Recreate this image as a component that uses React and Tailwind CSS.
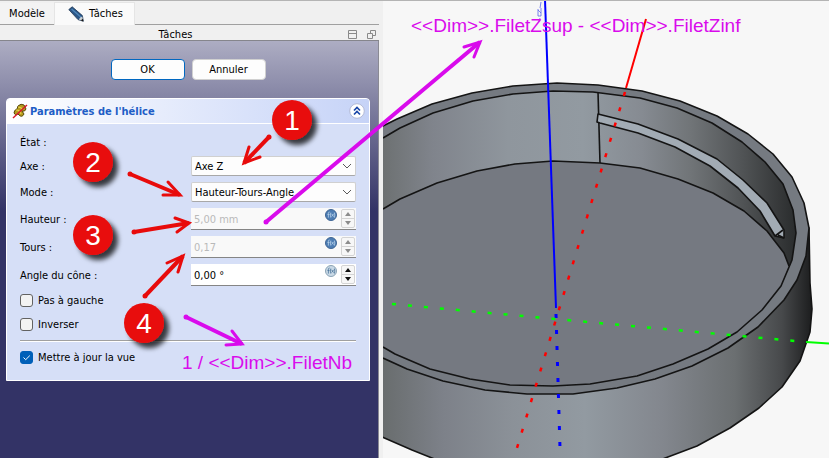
import { useState } from "react";
import clsx from "clsx";

const OUTER_RIM =
    "383,126 397,119 432,104 472,93 513,86 557,83 598,85 642,91 680,101 717,116 748,134 773,154 792,177 804,203 809,228 806,256 797,280 784,300 758,327 728,348 692,366 655,379 617,388 573,394 527,394 485,390 443,381 407,369 383,358";
const INNER_RIM =
    "383,138 400,128 433,113 473,101 513,94 553,91 593,92 640,98 677,108 712,123 742,142 765,162 783,184 793,210 796,233 792,260 781,286 762,310 737,332 708,349 673,364 637,376 590,384 553,386 510,385 470,379 430,369 395,354 383,347";
const FLOOR_EDGE =
    "383,209 400,199 437,183 477,171 515,164 553,161 600,163 640,168 678,179 713,193 744,211 767,231 784,253 789,266";
const FLOOR =
    FLOOR_EDGE + " 781,286 762,310 737,332 708,349 673,364 637,376 590,384 553,386 510,385 470,379 430,369 395,354 383,347";
const WALL =
    "380,340 809,228 810,283 812,309 810,332 800,361 782,387 759,408 730,428 697,446 660,460 437,460 412,450 380,436";

// Flèches : départ, pointe et les deux barbes
const ARROWS = [
    { color: "#e80b0b", from: [269, 137], tip: [244, 163], a: [249, 147], b: [260, 157] },
    { color: "#e80b0b", from: [130, 174], tip: [180, 195], a: [168, 182], b: [163, 195] },
    { color: "#e80b0b", from: [134, 232], tip: [189, 223], a: [175, 218], b: [177, 232] },
    { color: "#e80b0b", from: [145, 296], tip: [183, 256], a: [167, 263], b: [178, 272] },
    { color: "#d90bec", from: [266, 222], tip: [480, 42], a: [464, 47], b: [474, 57] },
    { color: "#d90bec", from: [186, 317], tip: [242, 344], a: [232, 331], b: [226, 345] },
];

const BADGES = [
    { n: 1, x: 292, y: 120 },
    { n: 2, x: 93, y: 162 },
    { n: 3, x: 93, y: 235 },
    { n: 4, x: 144, y: 323 },
];

function PencilIcon() {
    return (
        <svg className="h-4 w-4" viewBox="0 0 16 16" aria-hidden="true">
            <path d="M0.8 3.6 L4.2 0.8 L14.4 9.6 L15.3 15.2 L10 13.6 Z" fill="#2b5788" stroke="#1c3553" strokeWidth="0.8" />
            <path d="M3.6 3 L13 11.2" stroke="#4f86b8" strokeWidth="1.4" />
            <path d="M14.2 10.4 L15.3 15.2 L10.8 13.6 L12.2 11.4 Z" fill="#c9cfd4" />
            <path d="M14.8 12.8 L15.4 15.4 L12.8 14.5 Z" fill="#151515" />
        </svg>
    );
}

function HelixIcon() {
    return (
        <svg className="h-4 w-4 shrink-0" viewBox="0 0 16 16" aria-hidden="true">
            <path d="M6 3 Q9 0 12 2 L14 6 Q13 9 10 8 L12 11 Q10 15 7 12 L6 11 Q3 13 2 10 Q2 7 5 6 Z" fill="#b59a1c" stroke="#57490b" />
            <path d="M6 4 Q9 4 11 7 M4 7 Q8 7 9 11" fill="none" stroke="#e6d04a" strokeWidth="1.2" />
            <path d="M1 15 L15 2" stroke="#d8182a" strokeWidth="1.4" />
        </svg>
    );
}

function Combo({ id, value, options }) {
    const [current, setCurrent] = useState(value);
    return (
        <div className="relative">
            <select
                id={id}
                value={current}
                onChange={(e) => setCurrent(e.target.value)}
                className="block h-5 w-full appearance-none rounded-xs border border-[#d0d0d0] border-b-[#a8a8a8] bg-[#fdfdfd] pl-[3px] pr-5 pt-px text-[11px] leading-4 text-black"
            >
                {options.map((o) => (
                    <option key={o}>{o}</option>
                ))}
            </select>
            <svg className="pointer-events-none absolute right-1 top-1.5 h-2 w-2.5" viewBox="0 0 10 8" aria-hidden="true">
                <path d="M1 2 L5 6 L9 2" fill="none" stroke="#5a5a5a" />
            </svg>
        </div>
    );
}

function SpinBox({ id, value, disabled }) {
    const [text, setText] = useState(value);
    const arrow = disabled ? "#8c8c8c" : "#111111";
    return (
        <div
            className={clsx(
                "flex h-[22px] items-center border-b border-[#858585] pr-px",
                disabled ? "bg-[#f9f9f9]" : "bg-white"
            )}
        >
            <input
                id={id}
                type="text"
                value={text}
                disabled={disabled}
                onChange={(e) => setText(e.target.value)}
                className="w-0 flex-1 bg-transparent pl-[3px] pt-0.5 text-[11px] leading-4 text-black disabled:text-[#b9b9b9]"
            />
            <button type="button" aria-label="Éditeur de formule" className="mr-1 mb-2 h-3 w-3">
                <svg className="h-3 w-3" viewBox="0 0 12 12" aria-hidden="true">
                    <circle cx="6" cy="6" r="5.5" fill={disabled ? "#4d7db3" : "#c9d9e6"} stroke={disabled ? "#3f6594" : "#8ba3b5"} />
                    <path
                        d="M4.6 3 Q3.4 3 3.4 4.4 V8.6 M2.4 5.4 H4.6 M5.8 3.6 Q4.9 6 5.8 8.6 M6.6 4.8 L8.6 7.6 M8.6 4.8 L6.6 7.6 M9.4 3.6 Q10.2 6 9.4 8.6"
                        fill="none"
                        stroke={disabled ? "#b8d0e8" : "#4a7399"}
                        strokeWidth="0.8"
                    />
                </svg>
            </button>
            <div className="flex flex-col rounded-xs border border-[#d4d4d4] bg-[#f7f7f7]">
                <button type="button" disabled={disabled} aria-label="Augmenter" className="flex h-2 w-3 items-center justify-center">
                    <svg className="h-1 w-1.5" viewBox="0 0 6 4" aria-hidden="true">
                        <path d="M0 4 L3 0 L6 4 Z" fill={arrow} />
                    </svg>
                </button>
                <button
                    type="button"
                    disabled={disabled}
                    aria-label="Diminuer"
                    className="flex h-[9px] w-3 items-center justify-center border-t border-[#d4d4d4]"
                >
                    <svg className="h-1 w-1.5" viewBox="0 0 6 4" aria-hidden="true">
                        <path d="M0 0 L3 4 L6 0 Z" fill={arrow} />
                    </svg>
                </button>
            </div>
        </div>
    );
}

function Field({ id, label, children }) {
    return (
        <div className="grid grid-cols-[171px_1fr] items-center">
            <label htmlFor={id} className="pt-0.5">{label}</label>
            {children}
        </div>
    );
}

function Check({ label, initial = false, className }) {
    const [checked, setChecked] = useState(initial);
    return (
        <label className={clsx("flex items-center gap-[5px]", className)}>
            <span className="relative flex h-[13px] w-[13px]">
                <input
                    type="checkbox"
                    checked={checked}
                    onChange={(e) => setChecked(e.target.checked)}
                    className="h-full w-full appearance-none rounded-[3px] border border-[#626262] bg-[#f3f3f3] checked:border-[#005fb8] checked:bg-[#005fb8]"
                />
                {checked && (
                    <svg className="pointer-events-none absolute inset-0 h-full w-full" viewBox="0 0 13 13" aria-hidden="true">
                        <path d="M3.5 6.5 L5.7 8.7 L9.8 4.6" fill="none" stroke="#ffffff" />
                    </svg>
                )}
            </span>
            <span className="pt-0.5">{label}</span>
        </label>
    );
}

function TaskPanel() {
    return (
        <aside className="flex w-[379px] shrink-0 flex-col bg-[#f0f0f0]">
            {/* Onglets */}
            <div role="tablist" className="flex h-6 items-stretch border-b border-[#a0a0a0]">
                <button type="button" role="tab" aria-selected="false" className="mt-0.5 w-[54px] bg-[#f3f3f3] pt-px text-center">
                    Modèle
                </button>
                <button
                    type="button"
                    role="tab"
                    aria-selected="true"
                    className="-mb-px mt-px flex w-[81px] items-center gap-[5px] border-x border-t border-[#e5e5e5] bg-[#fafafa] pl-[13px]"
                >
                    <PencilIcon />
                    Tâches
                </button>
            </div>
            <div className="grid h-4 grid-cols-[1fr_auto_1fr] items-center border-b border-[#85858c]">
                <span />
                <span className="pr-7 pt-0.5">Tâches</span>
                <span className="flex justify-end gap-2.5 pr-[3px] text-[#8a8a8a]">
                    <button type="button" aria-label="Réduire">
                        <svg className="block h-[9px] w-[9px]" viewBox="0 0 9 9" aria-hidden="true">
                            <path d="M0.5 0.5 H8.5 V8.5 H0.5 Z M0.5 3.5 H8.5" fill="none" stroke="currentColor" />
                        </svg>
                    </button>
                    <button type="button" aria-label="Détacher">
                        <svg className="block h-[9px] w-[9px]" viewBox="0 0 9 9" aria-hidden="true">
                            <path d="M3.5 0.5 H8.5 V5.5 H3.5 Z" fill="none" stroke="currentColor" />
                            <path d="M0.5 3.5 H5.5 V8.5 H0.5 Z" fill="#f0f0f0" stroke="currentColor" />
                        </svg>
                    </button>
                </span>
            </div>

            <div className="flex-1 border-r border-[#8a8a94] bg-[#333366] bg-[linear-gradient(to_bottom,#adadc3_0px,#333366_170px)] pl-1.5 pr-2 pt-[18px]">
                <div className="flex justify-center gap-[7px]">
                    <button type="button" className="h-[21px] w-[74px] rounded-sm border border-[#0067c0] bg-[#fdfdfd] pt-px">
                        OK
                    </button>
                    <button type="button" className="h-[21px] w-[74px] rounded-sm border border-[#d0d0d0] bg-[#fdfdfd] pt-px">
                        Annuler
                    </button>
                </div>

                {/* Paramètres de l'hélice */}
                <section className="mt-[18px] overflow-hidden rounded-t-sm border border-white bg-[#d6dff7]">
                    <header className="flex h-[25px] items-center gap-0.5 border-b border-white bg-linear-to-r from-white to-[#c6d3f7] pl-[5px] pr-1">
                        <HelixIcon />
                        <h2 className="flex-1 pt-px text-[11px] font-bold text-[#215dc6]">Paramètres de l'hélice</h2>
                        <button type="button" aria-label="Replier">
                            <svg className="block h-4 w-4" viewBox="0 0 16 16" aria-hidden="true">
                                <circle cx="8" cy="8" r="7.3" fill="#ffffff" stroke="#b3bad6" />
                                <path d="M5 7.5 L8 4.5 L11 7.5 M5 11.5 L8 8.5 L11 11.5" fill="none" stroke="#1b47a8" strokeWidth="1.7" />
                            </svg>
                        </button>
                    </header>
                    <div className="px-[13px] pb-2 pt-[9px]">
                        <div className="flex flex-col gap-1.5">
                            <p className="h-[17px] leading-5">État :</p>
                            <Field id="axe" label="Axe :">
                                <Combo id="axe" value="Axe Z" options={["Axe X", "Axe Y", "Axe Z"]} />
                            </Field>
                            <Field id="mode" label="Mode :">
                                <Combo
                                    id="mode"
                                    value="Hauteur-Tours-Angle"
                                    options={["Pas-Hauteur-Angle", "Pas-Tours-Angle", "Hauteur-Tours-Angle"]}
                                />
                            </Field>
                            <Field id="hauteur" label="Hauteur :">
                                <SpinBox id="hauteur" value="5,00 mm" disabled />
                            </Field>
                            <Field id="tours" label="Tours :">
                                <SpinBox id="tours" value="0,17" disabled />
                            </Field>
                            <Field id="angle" label="Angle du cône :">
                                <SpinBox id="angle" value="0,00 °" />
                            </Field>
                        </div>
                        <div className="mt-0.5">
                            <Check label="Pas à gauche" className="h-6" />
                            <Check label="Inverser" className="h-6" />
                        </div>
                        <hr className="mt-1 h-0.5 border-b border-t border-b-white border-t-[#a0a0a0]" />
                        <Check label="Mettre à jour la vue" initial className="h-[30px]" />
                    </div>
                </section>
            </div>
        </aside>
    );
}

function View3D() {
    return (
        <main className="relative ml-1 min-w-0 flex-1 overflow-hidden bg-[#f7f7f7]">
            <svg className="h-full w-full" viewBox="383 1 446 457" preserveAspectRatio="xMinYMin slice" aria-label="Vue 3D">
                <defs>
                    <linearGradient id="inside" gradientUnits="userSpaceOnUse" x1="383" y1="0" x2="800" y2="0">
                        <stop offset="0" stopColor="#6d7172" />
                        <stop offset="0.12" stopColor="#80848c" />
                        <stop offset="0.3" stopColor="#8f969d" />
                        <stop offset="0.48" stopColor="#929aa1" />
                        <stop offset="0.62" stopColor="#868b92" />
                        <stop offset="0.74" stopColor="#707477" />
                        <stop offset="0.86" stopColor="#515456" />
                        <stop offset="1" stopColor="#27292a" />
                    </linearGradient>
                    <linearGradient id="outside" gradientUnits="userSpaceOnUse" x1="383" y1="0" x2="812" y2="0">
                        <stop offset="0" stopColor="#696d6e" />
                        <stop offset="0.14" stopColor="#7d8189" />
                        <stop offset="0.3" stopColor="#8b9198" />
                        <stop offset="0.47" stopColor="#929aa1" />
                        <stop offset="0.65" stopColor="#83878e" />
                        <stop offset="0.82" stopColor="#6b6f71" />
                        <stop offset="0.93" stopColor="#47494b" />
                        <stop offset="1" stopColor="#1c1d1e" />
                    </linearGradient>
                </defs>

                <g stroke="#141414" strokeWidth="1.6" strokeLinejoin="round">
                    <polygon points={WALL} fill="url(#outside)" />
                    <polyline points={OUTER_RIM} fill="#757a81" />
                    <polygon points={INNER_RIM} fill="url(#inside)" stroke="none" />
                    <polygon points={FLOOR} fill="#757981" stroke="none" />
                    <polyline points={FLOOR_EDGE} fill="none" />
                    <polyline points={INNER_RIM} fill="none" />
                    <path d="M598 92 L600 163" />
                    {/* Filet */}
                    <polygon
                        points="598,114 610,117 638,124 678,139 717,159 743,180 767,203 784,230 784,238 775,236 760,211 738,188 710,166 675,147 638,133 600,123 597,122"
                        fill="#a2abb4"
                    />
                    <path d="M775 236 L783 230 M778 235 L784 238" fill="none" />
                </g>

                {/* Axes */}
                <g strokeWidth="2" fill="none">
                    <path d="M545 0 L556 308" stroke="#0000ff" />
                    <path d="M556 314 L560 448" stroke="#0000ff" strokeWidth="3" strokeDasharray="4 12" />
                    <path d="M646 19 L626 88" stroke="#ff0000" />
                    <path d="M625 92 L517 448" stroke="#ff0000" strokeWidth="2.5" strokeDasharray="4 12" />
                    <path d="M392 304 L795 341" stroke="#00ff00" strokeWidth="2.5" strokeDasharray="4 12" />
                    <path d="M806 342 L829 343.5" stroke="#00ff00" />
                    <path d="M541 2 L540 8 M538 9 V16 M541 8 V16 M538 16 H541 M538 10 L541 13 M540 18 L539 22" stroke="#5964ea" strokeWidth="0.8" />
                </g>
            </svg>
        </main>
    );
}

function Annotations() {
    return (
        <svg className="pointer-events-none absolute left-0 top-0 h-[457px] w-[829px]" viewBox="0 1 829 457">
            <defs>
                <filter id="shadow" x="-50%" y="-50%" width="200%" height="200%">
                    <feDropShadow dx="5" dy="5" stdDeviation="2.5" floodColor="#000000" floodOpacity="0.75" />
                </filter>
            </defs>
            {ARROWS.map(({ color, from, tip, a, b }) => (
                <g key={from.join()} stroke={color} fill="none" strokeLinecap="round" strokeLinejoin="miter">
                    <path d={`M${from} L${tip}`} strokeWidth="4" strokeLinecap="butt" />
                    <circle cx={from[0]} cy={from[1]} r="2.5" fill={color} stroke="none" />
                    <path d={`M${a} L${tip} L${b}`} strokeWidth="3" />
                </g>
            ))}
            {BADGES.map(({ n, x, y }) => (
                <g key={n}>
                    <circle cx={x} cy={y} r="20" fill="#e80b0b" filter="url(#shadow)" />
                    <text x={x} y={y + 10} textAnchor="middle" className="fill-white font-['Liberation_Sans',sans-serif] text-[28px]">
                        {n}
                    </text>
                </g>
            ))}
            <g className="fill-[#d90bec] font-['Liberation_Sans',sans-serif] text-[19px]">
                <text x="411" y="32">{"<<Dim>>.FiletZsup - <<Dim>>.FiletZinf"}</text>
                <text x="182" y="369">{"1 / <<Dim>>.FiletNb"}</text>
            </g>
        </svg>
    );
}

export default function App() {
    return (
        <div className="relative flex h-screen min-h-[458px] overflow-hidden border-t border-[#b4b4b4] bg-[#f0f0f0] font-['DejaVu_Sans_Condensed','Noto_Sans',sans-serif] text-[11px] leading-4 text-black">
            <TaskPanel />
            <View3D />
            <Annotations />
        </div>
    );
}
